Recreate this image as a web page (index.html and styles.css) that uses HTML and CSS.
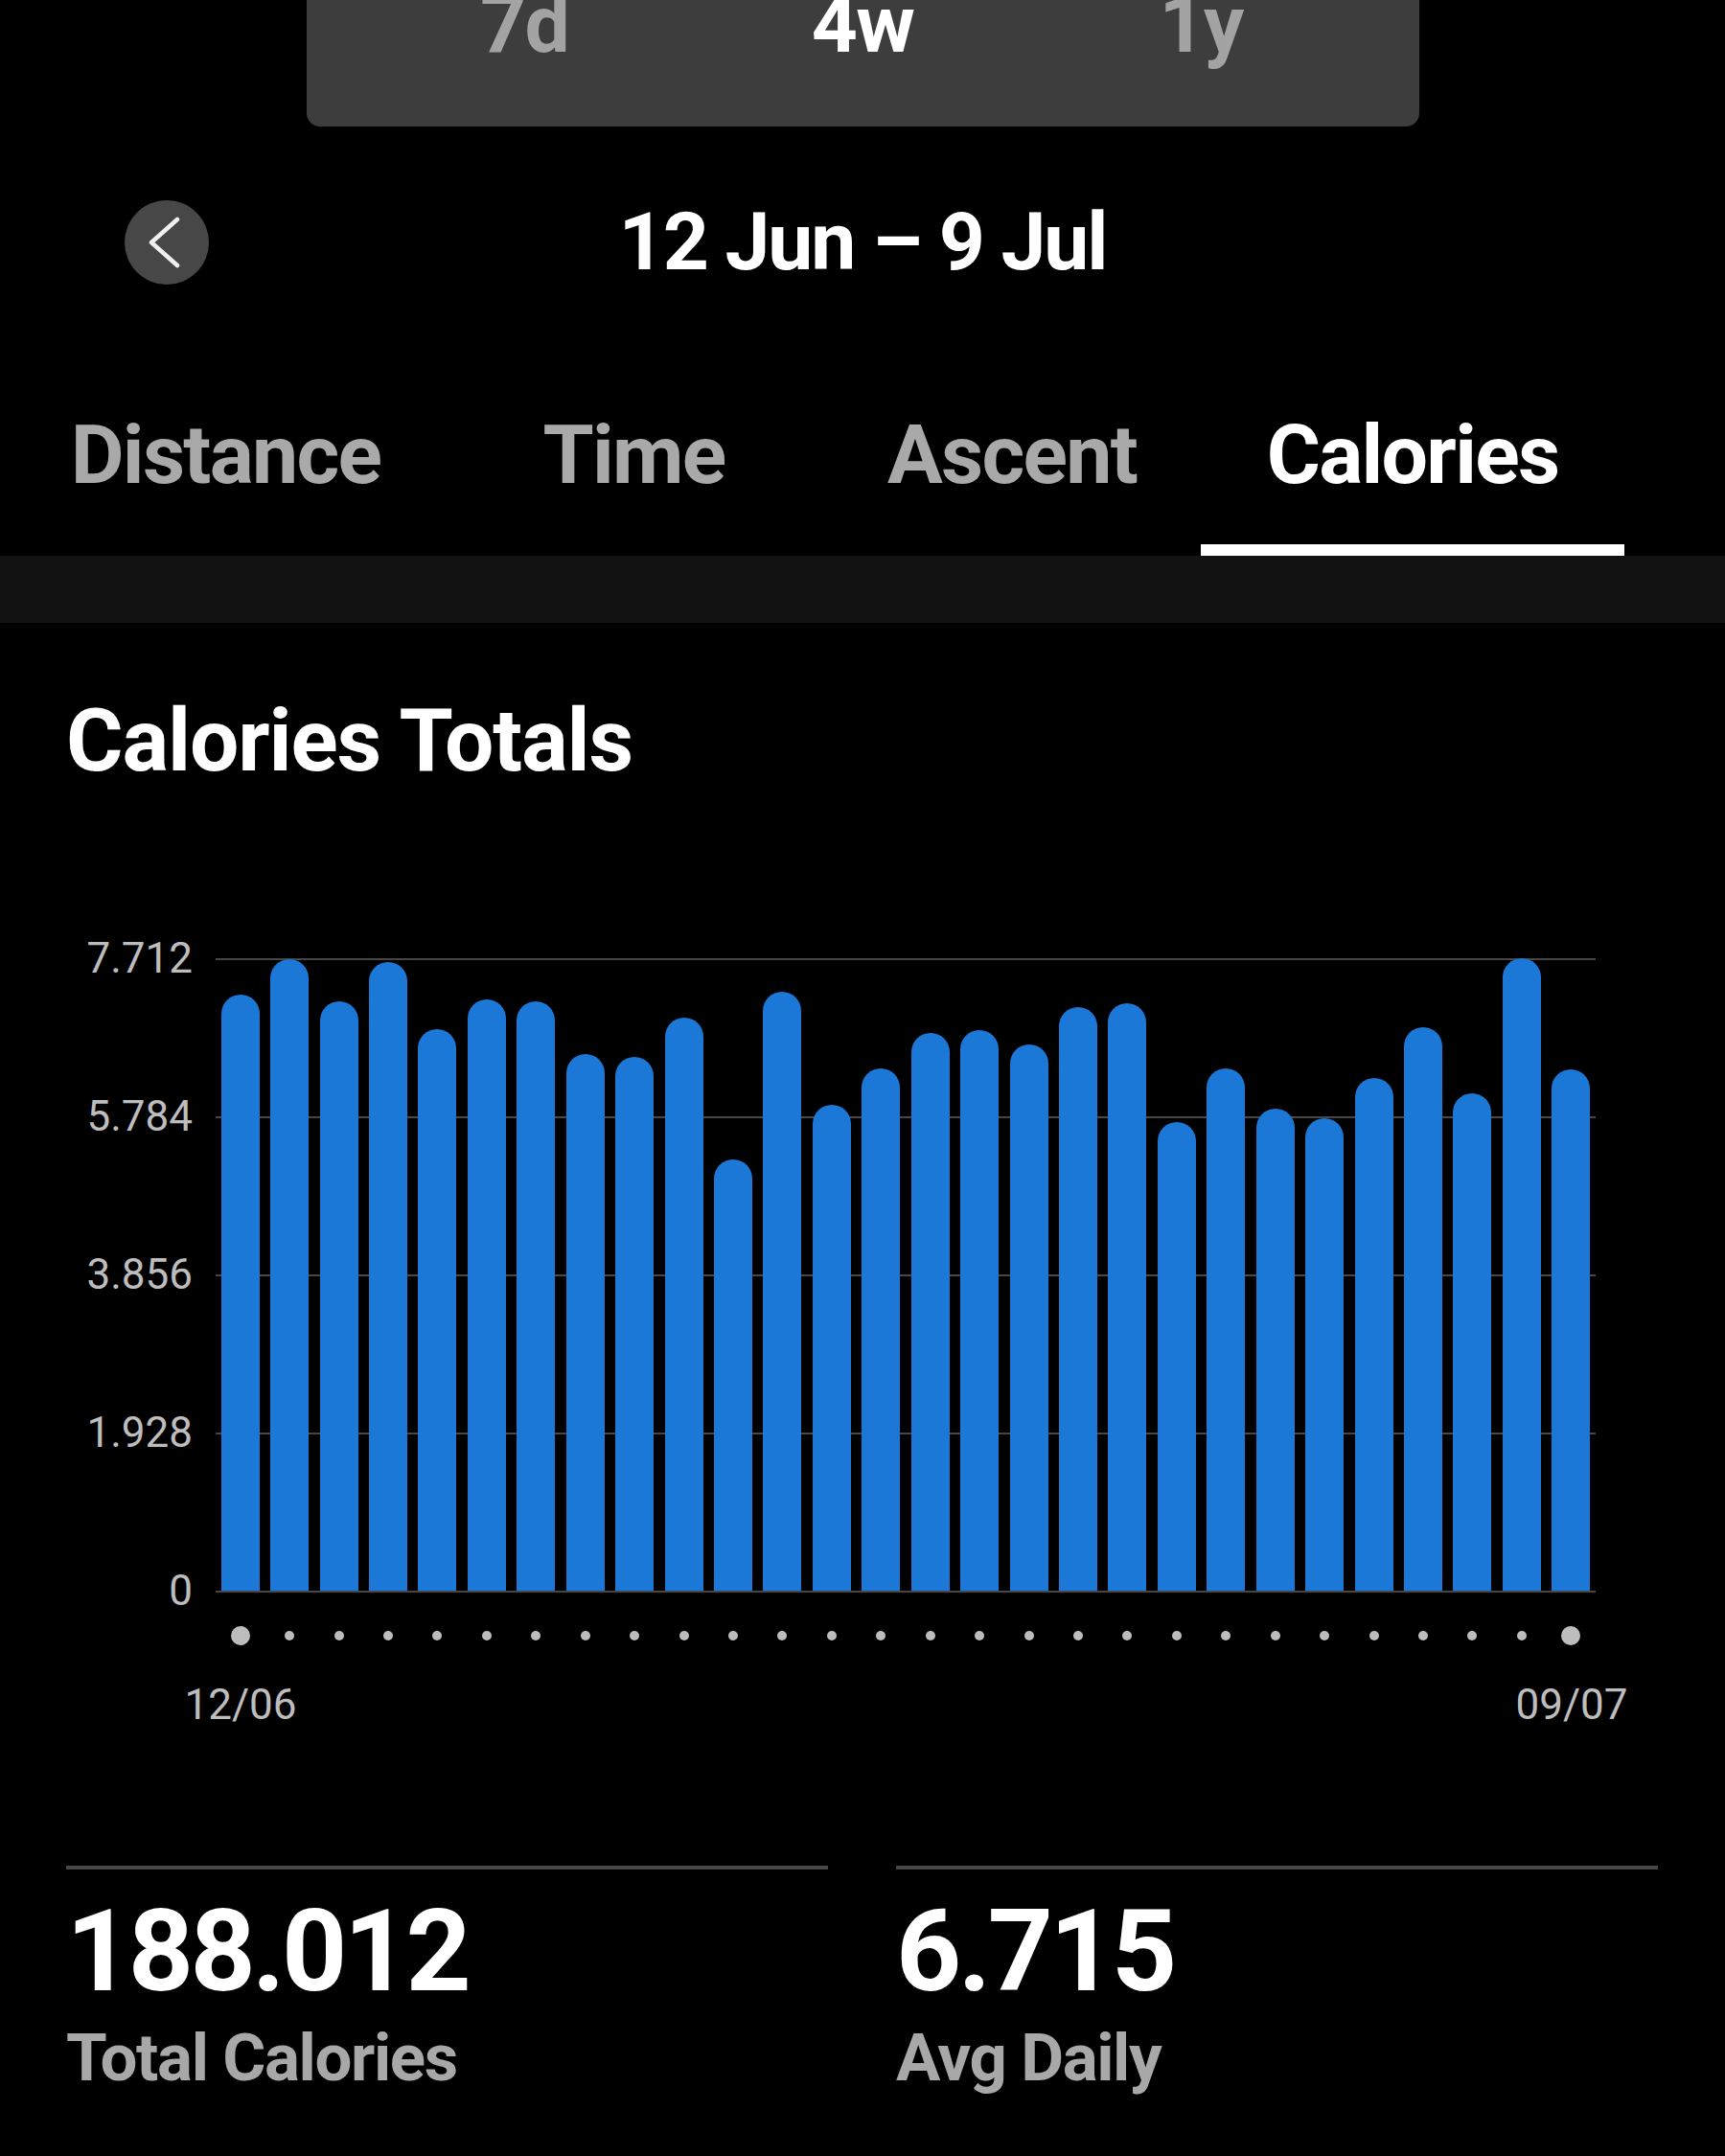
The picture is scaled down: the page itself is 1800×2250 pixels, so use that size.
FILE: index.html
```html
<!DOCTYPE html>
<html lang="en">
<head>
<meta charset="utf-8">
<title>Calories Totals</title>
<link rel="stylesheet" href="styles.css">
</head>
<body>
  <div class="range">
    <div class="range-item">7d</div>
    <div class="range-item active">4w</div>
    <div class="range-item">1y</div>
  </div>

  <div class="period">
    <div class="back">
      <svg class="back-icon" viewBox="0 0 88 88" width="88" height="88"><polyline points="55,20 28,44 55,68" fill="none" stroke="#f0f0f0" stroke-width="4.5" stroke-linecap="round" stroke-linejoin="round"/></svg>
    </div>
    <div class="period-title">12 Jun – 9 Jul</div>
    <div></div>
  </div>

  <div class="tabs">
    <div class="tab tab-distance">Distance</div>
    <div class="tab tab-time">Time</div>
    <div class="tab tab-ascent">Ascent</div>
    <div class="tab tab-calories active">Calories</div>
  </div>
  <div class="band"></div>

  <div class="section-title">Calories Totals</div>

  <div class="chart">
    <div class="chart-body">
      <div class="y-axis">
        <div>7.712</div>
        <div>5.784</div>
        <div>3.856</div>
        <div>1.928</div>
        <div>0</div>
      </div>
      <div class="plot">
        <div class="bar" style="height:622px"></div>
        <div class="bar" style="height:659px"></div>
        <div class="bar" style="height:615px"></div>
        <div class="bar" style="height:656px"></div>
        <div class="bar" style="height:586px"></div>
        <div class="bar" style="height:617px"></div>
        <div class="bar" style="height:615px"></div>
        <div class="bar" style="height:560px"></div>
        <div class="bar" style="height:557px"></div>
        <div class="bar" style="height:598px"></div>
        <div class="bar" style="height:450px"></div>
        <div class="bar" style="height:625px"></div>
        <div class="bar" style="height:507px"></div>
        <div class="bar" style="height:545px"></div>
        <div class="bar" style="height:582px"></div>
        <div class="bar" style="height:585px"></div>
        <div class="bar" style="height:570px"></div>
        <div class="bar" style="height:609px"></div>
        <div class="bar" style="height:613px"></div>
        <div class="bar" style="height:489px"></div>
        <div class="bar" style="height:545px"></div>
        <div class="bar" style="height:503px"></div>
        <div class="bar" style="height:493px"></div>
        <div class="bar" style="height:535px"></div>
        <div class="bar" style="height:588px"></div>
        <div class="bar" style="height:519px"></div>
        <div class="bar" style="height:660px"></div>
        <div class="bar" style="height:544px"></div>
      </div>
    </div>
    <div class="dots">
      <span class="dot big"></span><span class="dot"></span><span class="dot"></span><span class="dot"></span>
      <span class="dot"></span><span class="dot"></span><span class="dot"></span><span class="dot"></span>
      <span class="dot"></span><span class="dot"></span><span class="dot"></span><span class="dot"></span>
      <span class="dot"></span><span class="dot"></span><span class="dot"></span><span class="dot"></span>
      <span class="dot"></span><span class="dot"></span><span class="dot"></span><span class="dot"></span>
      <span class="dot"></span><span class="dot"></span><span class="dot"></span><span class="dot"></span>
      <span class="dot"></span><span class="dot"></span><span class="dot"></span><span class="dot big"></span>
    </div>
    <div class="dates">
      <div class="date">12/06</div>
      <div class="date">09/07</div>
    </div>
  </div>

  <div class="stats">
    <div class="stat">
      <div class="stat-value">188.012</div>
      <div class="stat-label">Total Calories</div>
    </div>
    <div class="stat">
      <div class="stat-value">6.715</div>
      <div class="stat-label">Avg Daily</div>
    </div>
  </div>
</body>
</html>
```
FILE: styles.css
```css
* { box-sizing: border-box; }

html, body {
  margin: 0;
  padding: 0;
  background: #000;
}

body {
  width: 1800px;
  height: 2250px;
  overflow: hidden;
  font-family: Roboto, "Liberation Sans", Arial, sans-serif;
  color: #fff;
}

/* range selector */
.range {
  width: 1161px;
  height: 132px;
  margin: 0 auto;
  padding: 0 51px;
  display: flex;
  background: #3d3d3d;
  border-radius: 0 0 14px 14px;
  overflow: hidden;
}

.range-item {
  flex: 1;
  text-align: center;
  font-size: 84px;
  font-weight: 700;
  line-height: 84px;
  margin-top: -16px;
  letter-spacing: -0.02em;
  color: #a3a3a3;
}

.range-item.active { color: #fff; }

/* period header */
.period {
  display: grid;
  grid-template-columns: 1fr auto 1fr;
  align-items: center;
  height: 88px;
  margin-top: 77px;
}

.back {
  width: 88px;
  height: 88px;
  margin-left: 130px;
  border-radius: 50%;
  background: #474747;
  display: flex;
}

.back-icon { display: block; }

.period-title {
  font-size: 84px;
  font-weight: 700;
  line-height: 88px;
  letter-spacing: -0.025em;
  white-space: nowrap;
}

/* tabs */
.tabs {
  display: flex;
  margin-top: 128px;
  padding-left: 7px;
}

.tab {
  flex: none;
  text-align: center;
  font-size: 86px;
  font-weight: 700;
  line-height: 100px;
  letter-spacing: -0.02em;
  padding-bottom: 43px;
  border-bottom: 12px solid transparent;
  color: #a9a9a9;
  white-space: nowrap;
}

.tab-distance { width: 457px; }
.tab-time { width: 395px; }
.tab-ascent { width: 394px; }
.tab-calories { width: 442px; }

.tab.active {
  color: #fff;
  border-bottom-color: #fff;
}

.band {
  height: 70px;
  background: #121212;
}

/* chart */
.section-title {
  margin: 73px 0 0 69px;
  font-size: 91px;
  font-weight: 700;
  line-height: 100px;
  letter-spacing: -0.012em;
}

.chart {
  margin-top: 177px;
  padding-left: 61px;
}

.chart-body {
  display: flex;
  align-items: flex-start;
  gap: 24px;
}

.y-axis {
  width: 140px;
  height: 708px;
  margin: -24px 0 -24px 0;
  display: flex;
  flex-direction: column;
  justify-content: space-between;
  text-align: right;
  font-size: 44px;
  line-height: 48px;
  color: #bdbdbd;
}

.plot {
  width: 1440px;
  height: 662px;
  border-bottom: 2px solid #474747;
  background: repeating-linear-gradient(to bottom, #474747 0 2px, transparent 2px 165px);
  display: grid;
  grid-template-columns: repeat(28, 1fr);
  align-items: end;
}

.bar {
  width: 40px;
  justify-self: center;
  background: #1b78d6;
  border-radius: 20px 20px 0 0;
}

.dots {
  margin-left: 164px;
  width: 1440px;
  height: 90px;
  display: grid;
  grid-template-columns: repeat(28, 1fr);
  align-items: center;
  justify-items: center;
}

.dot {
  width: 10px;
  height: 10px;
  border-radius: 50%;
  background: #bdbdbd;
}

.dot.big {
  width: 20px;
  height: 20px;
}

.dates {
  margin: 6px 0 0 130px;
  width: 1509px;
  display: flex;
  justify-content: space-between;
  font-size: 44px;
  line-height: 42px;
  color: #bdbdbd;
}

.date {
  width: 120px;
  text-align: center;
}

/* stats */
.stats {
  margin: 147px 0 0 69px;
  width: 1661px;
  display: grid;
  grid-template-columns: 1fr 1fr;
  column-gap: 71px;
}

.stat {
  border-top: 4px solid #474747;
}

.stat-value {
  margin-top: 21px;
  font-size: 119px;
  font-weight: 700;
  line-height: 130px;
  letter-spacing: -0.03em;
}

.stat-label {
  margin-top: 6px;
  font-size: 69px;
  font-weight: 700;
  line-height: 80px;
  letter-spacing: -0.02em;
  color: #a8a8a8;
}
```
